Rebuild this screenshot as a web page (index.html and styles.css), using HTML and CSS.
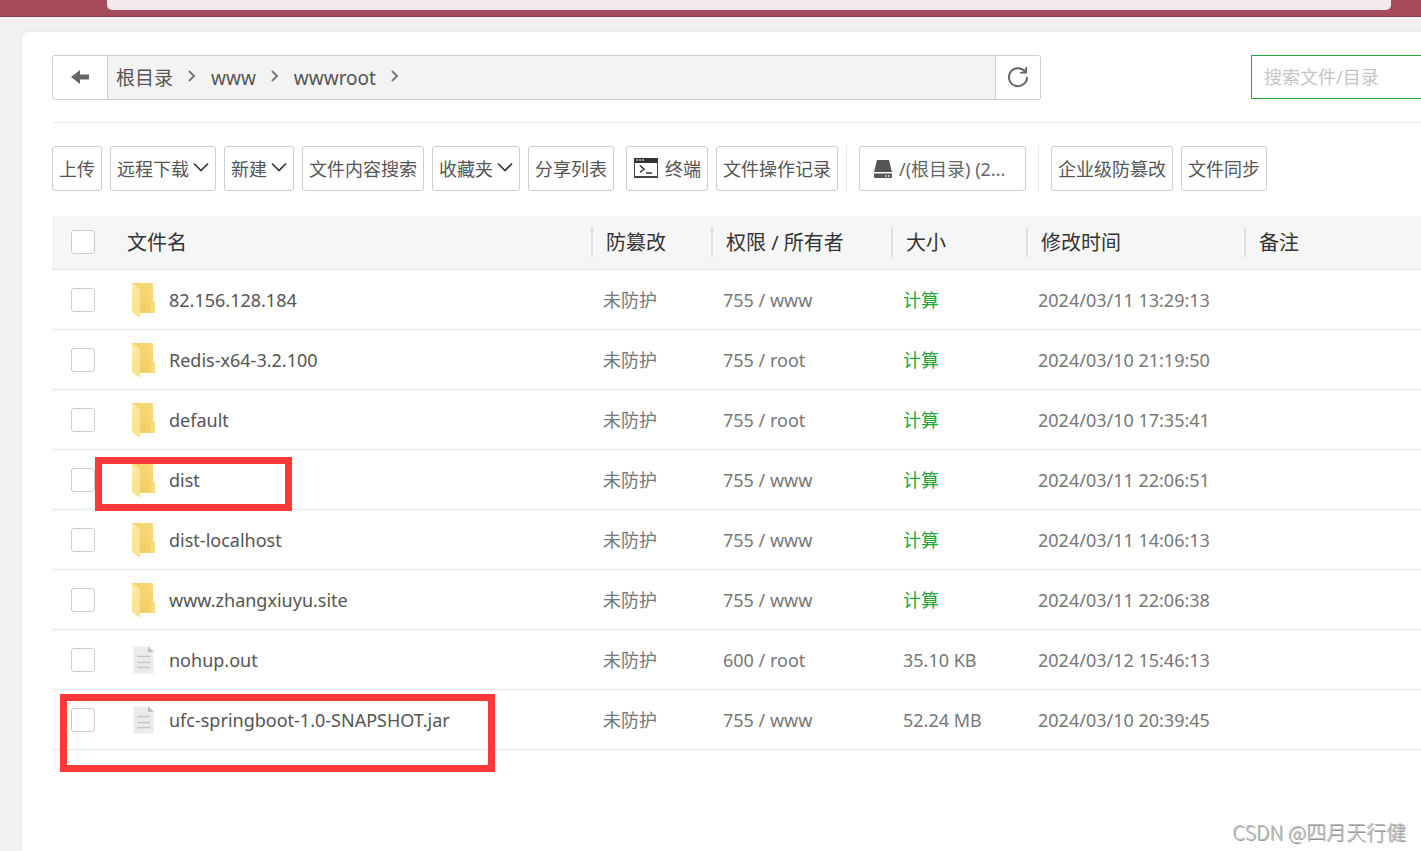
FILE: index.html
```html
<!DOCTYPE html>
<html lang="zh-CN">
<head>
<meta charset="utf-8">
<title>文件</title>
<link rel="stylesheet" href="styles.css">
</head>
<body>
<svg class="defs" aria-hidden="true">
  <defs>
    <linearGradient id="fold-back" x1="0" y1="1" x2="1" y2="0">
      <stop offset="0" stop-color="#efc85c"/><stop offset="1" stop-color="#fbdc7c"/>
    </linearGradient>
    <linearGradient id="fold-front" x1="0" y1="0" x2="0" y2="1">
      <stop offset="0" stop-color="#ffe9a4"/><stop offset="1" stop-color="#fde08a"/>
    </linearGradient>
    <symbol id="folder" viewBox="0 0 24 36">
      <path fill="url(#fold-back)" d="M1 1h21v18l2 2v9q0 1-1 1H8L1 28z"/>
      <path fill="#f9dc80" d="M20 20l3-1 1 2v9q0 1-1 1h-3z"/>
      <path fill="url(#fold-front)" d="M1 1l8 6v29l-8-6z"/>
    </symbol>
    <symbol id="file" viewBox="0 0 24 30">
      <path fill="#ebebeb" stroke="#f6f6f6" d="M2.500 1.500h14l6 6v21h-20z"/>
      <path fill="#bfbfbf" d="M17 1l6 6h-6z"/>
      <path stroke="#c6c6c6" stroke-width="1.300" d="M6 11.500h13M6 17.500h13M6 22.500h13"/>
    </symbol>
    <symbol id="caret" viewBox="0 0 16 10">
      <path fill="none" stroke="#333" stroke-width="1.600" d="M1 1.500l7 7 7-7"/>
    </symbol>
    <symbol id="chevron" viewBox="0 0 10 12">
      <path fill="none" stroke="#777" stroke-width="2" d="M2 1l5 5-5 5"/>
    </symbol>
  </defs>
</svg>
<header class="browser"><div class="address"></div></header>
<main class="card">
  <div class="path-row">
    <nav class="path">
      <button class="back" aria-label="返回"><svg width="18" height="16" viewBox="0 0 18 16"><path fill="#666" d="M0 8l9-7v4.500h9v5H9V15z"/></svg></button>
      <div class="crumbs">
        <a href="#">根目录</a><svg class="chev"><use href="#chevron"/></svg>
        <a href="#">www</a><svg class="chev"><use href="#chevron"/></svg>
        <a href="#">wwwroot</a><svg class="chev"><use href="#chevron"/></svg>
      </div>
      <button class="reload" aria-label="刷新"><svg width="22" height="22" viewBox="0 0 22 22"><path fill="none" stroke="#666" stroke-width="2" d="M18 5.500A9 9 0 1 0 20 11"/><path fill="#666" d="M20 1v6.500h-7V6l4.500-.5L18.500 1z"/></svg></button>
    </nav>
    <input class="search" type="text" placeholder="搜索文件/目录" aria-label="搜索文件/目录">
  </div>
  <div class="toolbar">
    <button class="upload">上传</button>
    <button>远程下载<svg class="caret"><use href="#caret"/></svg></button>
    <button>新建<svg class="caret"><use href="#caret"/></svg></button>
    <button>文件内容搜索</button>
    <button>收藏夹<svg class="caret"><use href="#caret"/></svg></button>
    <button>分享列表</button>
    <button class="terminal"><svg width="24" height="20" viewBox="0 0 24 20"><path fill="#333" d="M0 0h24v5H0z"/><path fill="none" stroke="#444" d="M.5 4v15.500h23V4"/><path stroke="#444" stroke-width="2" d="M0 19h24"/><path stroke="#fff" d="M2 2h2M5 2h2M8 2h2"/><path fill="none" stroke="#333" stroke-width="1.500" d="M6 7.500l4 3.500-4 3.500M12 15h6"/></svg>终端</button>
    <button>文件操作记录</button>
    <span class="sep"></span>
    <button class="disk"><svg width="18" height="18" viewBox="0 0 18 18"><path fill="#555" d="M3 0h12l3 12H0z"/><path fill="#555" d="M0 13.500h18V17q0 1-1 1H1q-1 0-1-1z"/><path stroke="#fff" stroke-width="1.500" d="M11 16h1.500M14 16h1.500"/></svg>/(根目录) (2...</button>
    <span class="sep"></span>
    <button>企业级防篡改</button>
    <button>文件同步</button>
  </div>
  <table class="files">
    <colgroup><col class="c-check"><col class="c-name"><col class="c-guard"><col class="c-perm"><col class="c-size"><col class="c-time"><col></colgroup>
    <thead>
      <tr><th class="check"><input type="checkbox" aria-label="全选"></th><th>文件名</th><th class="line">防篡改</th><th class="line">权限 / 所有者</th><th class="line">大小</th><th class="line">修改时间</th><th class="line">备注</th></tr>
    </thead>
    <tbody>
      <tr><td class="check"><input type="checkbox" aria-label="82.156.128.184"></td><td><div class="name"><svg class="folder"><use href="#folder"/></svg>82.156.128.184</div></td><td>未防护</td><td>755 / www</td><td><a href="#">计算</a></td><td>2024/03/11 13:29:13</td><td></td></tr>
      <tr><td class="check"><input type="checkbox" aria-label="Redis-x64-3.2.100"></td><td><div class="name"><svg class="folder"><use href="#folder"/></svg>Redis-x64-3.2.100</div></td><td>未防护</td><td>755 / root</td><td><a href="#">计算</a></td><td>2024/03/10 21:19:50</td><td></td></tr>
      <tr><td class="check"><input type="checkbox" aria-label="default"></td><td><div class="name"><svg class="folder"><use href="#folder"/></svg>default</div></td><td>未防护</td><td>755 / root</td><td><a href="#">计算</a></td><td>2024/03/10 17:35:41</td><td></td></tr>
      <tr><td class="check"><input type="checkbox" aria-label="dist"></td><td><div class="name"><svg class="folder"><use href="#folder"/></svg>dist</div></td><td>未防护</td><td>755 / www</td><td><a href="#">计算</a></td><td>2024/03/11 22:06:51</td><td></td></tr>
      <tr><td class="check"><input type="checkbox" aria-label="dist-localhost"></td><td><div class="name"><svg class="folder"><use href="#folder"/></svg>dist-localhost</div></td><td>未防护</td><td>755 / www</td><td><a href="#">计算</a></td><td>2024/03/11 14:06:13</td><td></td></tr>
      <tr><td class="check"><input type="checkbox" aria-label="www.zhangxiuyu.site"></td><td><div class="name"><svg class="folder"><use href="#folder"/></svg>www.zhangxiuyu.site</div></td><td>未防护</td><td>755 / www</td><td><a href="#">计算</a></td><td>2024/03/11 22:06:38</td><td></td></tr>
      <tr><td class="check"><input type="checkbox" aria-label="nohup.out"></td><td><div class="name"><svg class="file"><use href="#file"/></svg>nohup.out</div></td><td>未防护</td><td>600 / root</td><td>35.10 KB</td><td>2024/03/12 15:46:13</td><td></td></tr>
      <tr><td class="check"><input type="checkbox" aria-label="ufc-springboot-1.0-SNAPSHOT.jar"></td><td><div class="name"><svg class="file"><use href="#file"/></svg>ufc-springboot-1.0-SNAPSHOT.jar</div></td><td>未防护</td><td>755 / www</td><td>52.24 MB</td><td>2024/03/10 20:39:45</td><td></td></tr>
    </tbody>
  </table>
  <div class="mark mark-dist"></div>
  <div class="mark mark-jar"></div>
  <div class="watermark">CSDN @四月天行健</div>
</main>
</body>
</html>
```

FILE: styles.css
```css
* { box-sizing: border-box; }
body {
  margin: 0;
  min-height: 100vh;
  display: flex;
  flex-direction: column;
  background: #f1f1f1;
  color: #555;
  font: 18px/24px "Noto Sans", "Noto Sans CJK SC", sans-serif;
}
button, input { font: inherit; color: inherit; }
button { cursor: pointer; }
a { color: inherit; text-decoration: none; }
svg { flex: none; }
.defs { position: absolute; width: 0; height: 0; }

.browser {
  height: 17px;
  padding: 0 30px 0 107px;
  background: #a54b5b;
  border-bottom: 1px solid #8c3f4e;
}
.address { height: 10px; background: #f6e9eb; border-radius: 0 0 5px 5px; }

.card {
  position: relative;
  flex: 1;
  margin: 15px 0 0 22px;
  padding: 23px 0 0 30px;
  background: #fff;
  border-radius: 6px 0 0 0;
  box-shadow: 0 0 2px #ddd;
}

.path-row {
  display: flex;
  justify-content: space-between;
  gap: 210px;
  padding-bottom: 22px;
  border-bottom: 1px solid #ededed;
}
.path {
  flex: 1;
  display: flex;
  height: 45px;
  border: 1px solid #ccc;
  border-radius: 3px;
  overflow: hidden;
}
.path button {
  display: flex;
  align-items: center;
  justify-content: center;
  padding: 0 0 2px;
  border: 0;
  background: #fff;
}
.back { width: 54px; }
.reload { width: 44px; }
.crumbs {
  flex: 1;
  display: flex;
  align-items: center;
  padding-left: 8px;
  background: #f3f3f3;
  border: solid #ccc;
  border-width: 0 1px;
}
.crumbs a { font-size: 19px; }
.chev { width: 10px; height: 12px; margin: 0 14px 4px; }
.search {
  width: 170px;
  height: 44px;
  padding: 0 12px;
  border: 1px solid #20a53a;
  border-right: 0;
  outline: 0;
}
.search::placeholder { color: #c4c4c4; }

.toolbar { display: flex; gap: 8px; padding: 23px 0 25px; white-space: nowrap; }
.toolbar button {
  display: flex;
  align-items: center;
  height: 45px;
  padding: 0 6px;
  background: #fff;
  border: 1px solid #ccc;
  border-radius: 3px;
}
.caret { width: 16px; height: 10px; margin: 0 0 3px 4px; }
.toolbar .terminal { margin-left: 4px; padding-left: 7px; gap: 7px; }
.terminal svg { margin-bottom: 2px; }
.sep { width: 1px; height: 45px; background: #e6e6e6; }
.toolbar .sep + button { margin-left: 4px; }
.toolbar .disk { width: 167px; margin-right: 4px; padding: 0 14px; gap: 7px; color: #666; }

.files { width: 100%; table-layout: fixed; border-collapse: collapse; }
.c-check { width: 60px; }
.c-name { width: 479px; }
.c-guard { width: 120px; }
.c-perm { width: 180px; }
.c-size { width: 135px; }
.c-time { width: 218px; }
.files th {
  height: 53px;
  padding: 2px 15px 0;
  background: #f6f6f6;
  border-bottom: 1px solid #e8e8e8;
  color: #333;
  font-size: 20px;
  font-weight: 400;
  text-align: left;
}
.files .line {
  background: linear-gradient(#e0e0e0, #e0e0e0) 0 50% / 2px 30px no-repeat #f6f6f6;
}
.files td {
  height: 60px;
  padding: 2px 12px 0;
  border-bottom: 1px solid #e8e8e8;
  color: #777;
}
.files td.check { padding: 2px 0 0 19px; }
.files th.check { padding: 0 0 0 19px; }
.files td a { color: #20a53a; }
.check input {
  display: block;
  appearance: none;
  width: 24px;
  height: 24px;
  margin: 0;
  background: #fff;
  border: 1px solid #ccc;
  border-radius: 3px;
}
.name { display: flex; align-items: center; padding-left: 7px; gap: 14px; color: #555; }
.folder { width: 24px; height: 36px; }
.file { width: 24px; height: 30px; }

.mark { position: absolute; border: 7px solid #fc3838; pointer-events: none; }
.mark-dist { left: 73px; top: 425px; width: 197px; height: 54px; }
.mark-jar { left: 38px; top: 662px; width: 435px; height: 78px; }
.watermark {
  position: absolute;
  right: 15px;
  bottom: 6px;
  color: #bbb;
  font: 300 20px/26px "Noto Sans CJK SC", sans-serif;
  text-shadow: 1px 1px 0 #999;
}
```
